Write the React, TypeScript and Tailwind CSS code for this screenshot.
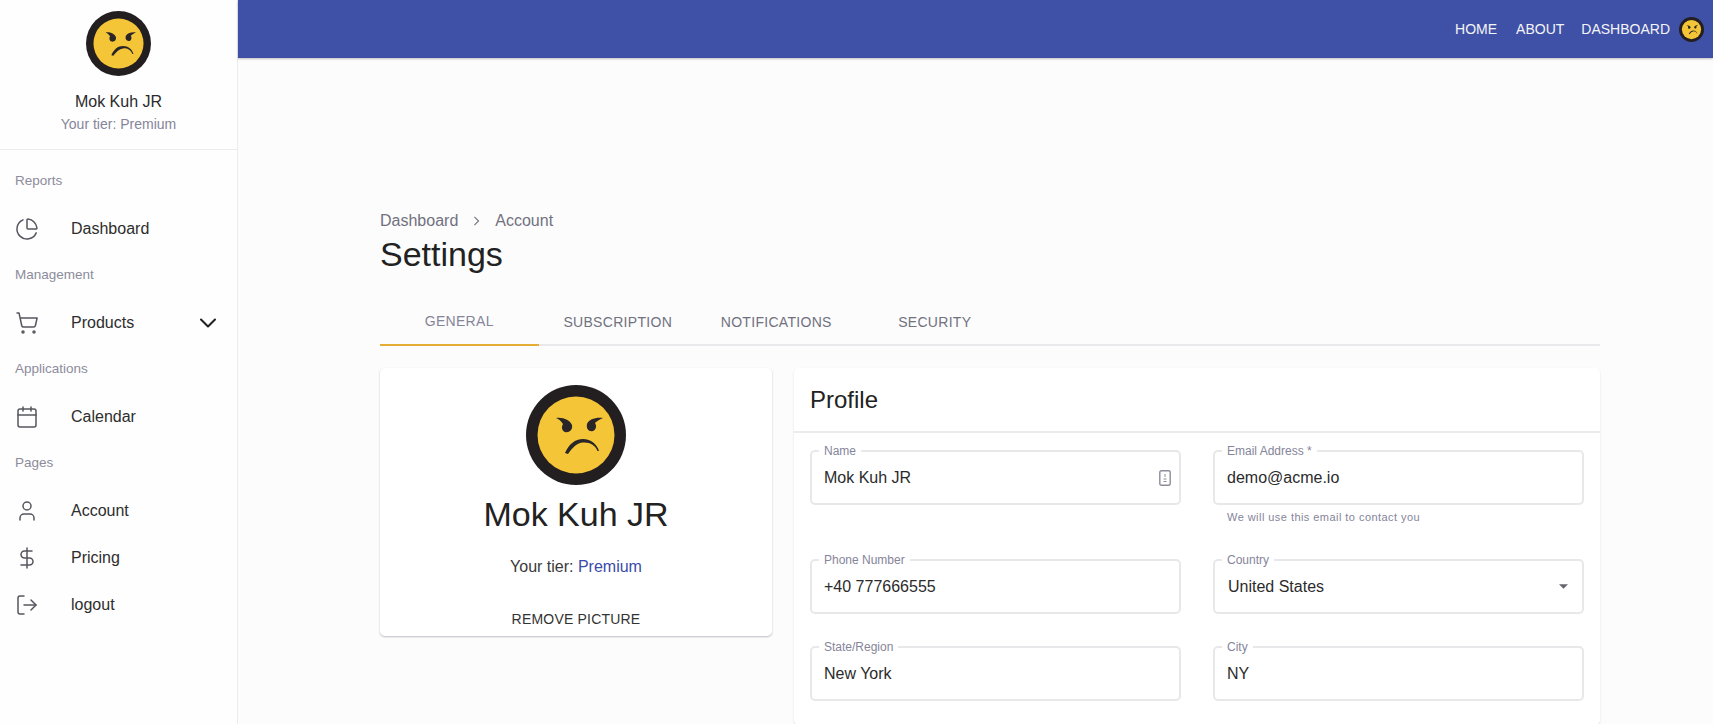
import { Calendar, ChevronDown, DollarSign, LogOut, PieChart, ShoppingCart, User } from 'lucide-react'
import type { LucideIcon } from 'lucide-react'

function AngryFace({ className }: { className: string }) {
  return (
    <svg viewBox="0 0 100 100" className={className}>
      <circle cx="50" cy="50" r="50" fill="#231f20" />
      <circle cx="50" cy="50" r="38.5" fill="#f5c538" />
      <path d="M30 33 C37 32 44 35 46 40 C47 45 43 48 39 47 C36 46 35 42 37 39 C35 36 33 34 30 33 Z" fill="#2a2627" />
      <path d="M77 33 C70 32 63 34 61 39 C60 44 63 47 67 46 C70 45 71 41 69 38 C71 36 74 34 77 33 Z" fill="#2a2627" />
      <path d="M39 68 C43 59 49 54 57 54 C65 54 71 59 73 66 L71.500 66 C69 60 64 57 57 57.500 C51 58 47 62 42 69 Z" fill="#2a2627" />
    </svg>
  )
}

function Section({ title, items }: { title: string; items: { icon: LucideIcon; label: string; chevron?: boolean }[] }) {
  return (
    <div>
      <div className="flex h-[47px] items-center px-[15px] text-[13.5px] text-[#8c8c9c]">{title}</div>
      {items.map(({ icon: Icon, label, chevron }) => (
        <div key={label} className="flex h-[47px] items-center pl-[15px] pr-[15px] text-base text-[#2d2d2d]">
          <Icon size={24} strokeWidth={1.5} className="shrink-0 text-[#55555f]" />
          <span className="ml-8 flex-1">{label}</span>
          {chevron && <ChevronDown size={28} strokeWidth={1.8} className="text-[#222]" />}
        </div>
      ))}
    </div>
  )
}

function Field({ label, value, helper, icon, select }: { label: string; value: string; helper?: string; icon?: boolean; select?: boolean }) {
  return (
    <div>
      <div className="relative flex h-[55px] items-center rounded-[5px] border-2 border-[#e8e8ea] pl-[12px] pr-[8px] text-base text-[#2b2b2b]">
        <span className="absolute -top-[9px] left-[7px] bg-white px-[5px] text-xs text-[#85859a]">{label}</span>
        <span className={select ? 'flex-1 pl-[1px]' : 'flex-1'}>{value}</span>
        {icon && (
          <svg viewBox="0 0 12 16" className="h-[16px] w-[12px]" fill="none">
            <rect x="0.800" y="0.800" width="10.400" height="14.400" rx="1.500" stroke="#8d8d9b" strokeWidth="1.400" />
            <path d="M6 4v3M4.500 9h3M4.500 11.500h3" stroke="#8d8d9b" strokeWidth="1" />
          </svg>
        )}
        {select && (
          <svg viewBox="0 0 10 5" className="mr-[6px] h-[5px] w-[9px]">
            <path d="M0 0h10L5 5z" fill="#66666f" />
          </svg>
        )}
      </div>
      {helper && <div className="mt-[4px] h-[18px] pl-[14px] text-[11px] tracking-[0.45px] text-[#85859a]">{helper}</div>}
    </div>
  )
}

const tabs = ['General', 'Subscription', 'Notifications', 'Security']

export default function App() {
  return (
    <div className="flex h-screen overflow-hidden bg-[#fcfcfc] font-['Liberation_Sans',Arial,sans-serif]">
      <aside className="w-[238px] shrink-0 border-r border-[#ececee] bg-[#fefefe]">
        <div className="flex h-[150px] flex-col items-center border-b border-[#ececee] pt-[11px]">
          <AngryFace className="h-[65px] w-[65px]" />
          <div className="mt-[16px] text-base leading-5 text-[#2b2b2b]">Mok Kuh JR</div>
          <div className="mt-[2px] text-sm leading-5 text-[#85859a]">Your tier: Premium</div>
        </div>
        <nav className="pt-[8px]">
          <Section title="Reports" items={[{ icon: PieChart, label: 'Dashboard' }]} />
          <Section title="Management" items={[{ icon: ShoppingCart, label: 'Products', chevron: true }]} />
          <Section title="Applications" items={[{ icon: Calendar, label: 'Calendar' }]} />
          <Section
            title="Pages"
            items={[
              { icon: User, label: 'Account' },
              { icon: DollarSign, label: 'Pricing' },
              { icon: LogOut, label: 'logout' },
            ]}
          />
        </nav>
      </aside>

      <div className="flex min-w-0 flex-1 flex-col">
        <header className="flex h-[58px] shrink-0 items-center justify-end bg-[#3f51a7] pr-[9px] text-sm text-[#f4f4f6] shadow-[0_1px_2px_rgba(0,0,0,0.25)]">
          <span>HOME</span>
          <span className="ml-[19px]">ABOUT</span>
          <span className="ml-[17px]">DASHBOARD</span>
          <AngryFace className="ml-[9px] h-[25px] w-[25px]" />
        </header>

        <main className="flex-1 pl-[142px] pr-[113px] pt-[151px]">
          <div className="flex h-[24px] items-center text-base text-[#71717f]">
            <span>Dashboard</span>
            <span className="mx-[15px] text-[#71717f]">
              <svg viewBox="0 0 8 12" className="h-[10px] w-[7px]" fill="none">
                <path d="M1.500 1l5 5-5 5" stroke="currentColor" strokeWidth="1.300" />
              </svg>
            </span>
            <span>Account</span>
          </div>
          <h1 className="text-[34px] font-normal leading-[42px] text-[#222]">Settings</h1>

          <div className="mt-[22px] flex h-[49px] border-b-2 border-[#e9e9eb]">
            {tabs.map((tab, i) => (
              <div
                key={tab}
                className={`-mb-[2px] flex w-[158.500px] items-center justify-center text-sm uppercase tracking-[0.3px] ${
                  i === 0 ? 'border-b-2 border-[#e4ae35] text-[#85859a]' : 'text-[#71717f]'
                }`}
              >
                {tab}
              </div>
            ))}
          </div>

          <div className="mt-[22px] flex items-start gap-[22px]">
            <section className="flex h-[268px] w-[392px] shrink-0 flex-col items-center rounded-[5px] bg-white pt-[17px] shadow-[0_1px_2px_rgba(70,70,100,0.35)]">
              <AngryFace className="h-[100px] w-[100px]" />
              <div className="mt-[9px] text-[34px] leading-[40px] text-[#222]">Mok Kuh JR</div>
              <div className="mt-[21px] text-base leading-6 text-[#3a3a3a]">
                Your tier: <span className="text-[#3a4ba8]">Premium</span>
              </div>
              <div className="mt-[28px] text-sm leading-6 tracking-[0.2px] text-[#333]">REMOVE PICTURE</div>
            </section>

            <section className="min-w-0 flex-1 rounded-[5px] bg-white shadow-[0_1px_2px_rgba(70,70,100,0.18)]">
              <div className="flex h-[65px] items-center border-b-2 border-[#ececee] px-[16px] text-2xl text-[#222]">Profile</div>
              <div className="grid grid-cols-2 gap-x-[32px] gap-y-[32px] px-[16px] pb-[24px] pt-[17px]">
                <Field label="Name" value="Mok Kuh JR" icon />
                <Field label="Email Address *" value="demo@acme.io" helper="We will use this email to contact you" />
                <Field label="Phone Number" value="+40 777666555" />
                <Field label="Country" value="United States" select />
                <Field label="State/Region" value="New York" />
                <Field label="City" value="NY" />
              </div>
            </section>
          </div>
        </main>
      </div>
    </div>
  )
}
